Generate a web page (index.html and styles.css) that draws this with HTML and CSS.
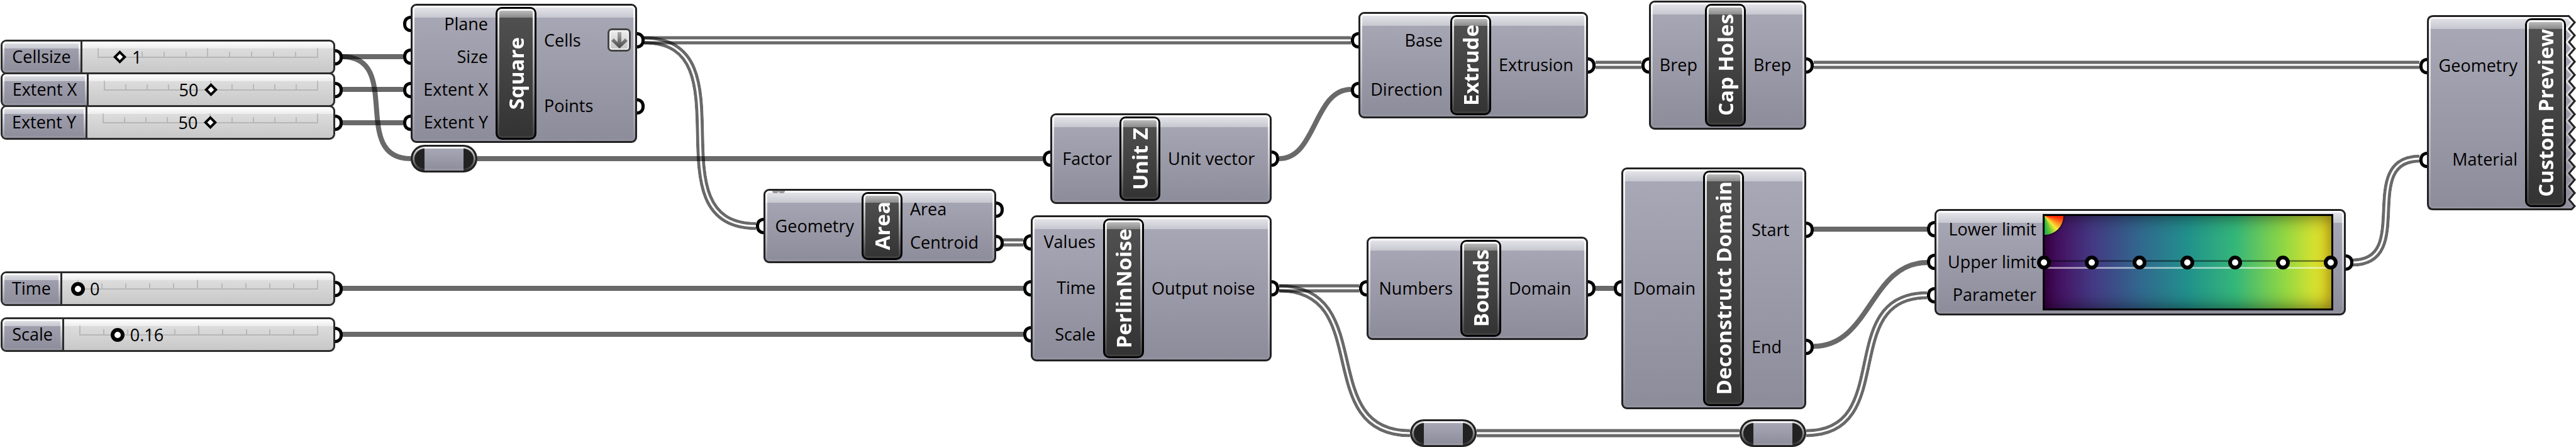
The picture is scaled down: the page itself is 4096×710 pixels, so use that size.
FILE: index.html
```html
<!DOCTYPE html>
<html lang="en">
<head>
<meta charset="utf-8">
<title>Noise field definition</title>
<link rel="stylesheet" href="styles.css">
</head>
<body>
<main class="canvas">
  <svg class="wires" aria-hidden="true">
    <defs>
      <path id="w-area" d="M1024 64C1196 64 1030 359 1202 359"/>
      <path id="w-relay" d="M2034 458C2189 458 2087 688 2242 688"/>
      <path id="w-param" d="M2872 688C3018 688 2918 469 3064 469"/>
      <path id="w-material" d="M3741 417C3840 417 3748 252 3847 252"/>
      <mask id="m-area" maskUnits="userSpaceOnUse" x="1000" y="40" width="230" height="340"><use href="#w-area" class="mask-on"/><use href="#w-area" class="mask-off"/></mask>
      <mask id="m-relay" maskUnits="userSpaceOnUse" x="2000" y="430" width="260" height="280"><use href="#w-relay" class="mask-on"/><use href="#w-relay" class="mask-off"/></mask>
      <mask id="m-param" maskUnits="userSpaceOnUse" x="2860" y="440" width="220" height="270"><use href="#w-param" class="mask-on"/><use href="#w-param" class="mask-off"/></mask>
      <mask id="m-material" maskUnits="userSpaceOnUse" x="3730" y="230" width="140" height="210"><use href="#w-material" class="mask-on"/><use href="#w-material" class="mask-off"/></mask>
    </defs>
    <g class="single">
      <path d="M544 90H641"/><path d="M544 142H641"/><path d="M544 195H641"/>
      <path d="M544 90C641 90 556 252 653 252"/>
      <path d="M759 252H1658"/>
      <path d="M2034 252C2093 252 2089 142 2148 142"/>
      <path d="M544 458H1627"/><path d="M544 531H1627"/>
      <path d="M2537 458H2566"/><path d="M2884 364H3064"/>
      <path d="M2884 550C2974 550 2974 417 3064 417"/>
    </g>
    <g class="double">
      <path d="M1024 60H2148M1024 68H2148"/>
      <path d="M2537 99H2610M2537 107H2610"/>
      <path d="M2884 99H3847M2884 107H3847"/>
      <path d="M1595 381H1627M1595 389H1627"/>
      <path d="M2034 454H2161M2034 462H2161"/>
      <path d="M2348 684H2766M2348 692H2766"/>
    </g>
    <g class="wide">
      <g mask="url(#m-area)"><use href="#w-area"/></g>
      <g mask="url(#m-relay)"><use href="#w-relay"/></g>
      <g mask="url(#m-param)"><use href="#w-param"/></g>
      <g mask="url(#m-material)"><use href="#w-material"/></g>
    </g>
  </svg>

  <div class="sliders extents">
    <div class="slider cellsize">
      <label for="cellsize">Cellsize</label>
      <div class="track"><span class="ticks"><i></i><i></i><i></i><i></i><i></i><i></i><i></i><i></i><i></i><i></i><i></i></span>
        <input class="diamond" id="cellsize" type="range" min="0" max="10" value="1">
        <div class="values"><output class="after" for="cellsize" style="left:10%">1</output></div></div>
      <span class="port out"></span>
    </div>
    <div class="slider extent-x">
      <label for="extent-x">Extent X</label>
      <div class="track"><span class="ticks"><i></i><i></i><i></i><i></i><i></i><i></i><i></i><i></i><i></i><i></i><i></i></span>
        <input class="diamond" id="extent-x" type="range" min="0" max="100" value="50">
        <div class="values"><output class="before" for="extent-x" style="right:50%">50</output></div></div>
      <span class="port out"></span>
    </div>
    <div class="slider extent-y">
      <label for="extent-y">Extent Y</label>
      <div class="track"><span class="ticks"><i></i><i></i><i></i><i></i><i></i><i></i><i></i><i></i><i></i><i></i><i></i></span>
        <input class="diamond" id="extent-y" type="range" min="0" max="100" value="50">
        <div class="values"><output class="before" for="extent-y" style="right:50%">50</output></div></div>
      <span class="port out"></span>
    </div>
  </div>

  <div class="sliders noise-inputs">
    <div class="slider time">
      <label for="time">Time</label>
      <div class="track"><span class="ticks"><i></i><i></i><i></i><i></i><i></i><i></i><i></i><i></i><i></i><i></i><i></i></span>
        <input class="round" id="time" type="range" min="0" max="1" step="0.01" value="0">
        <div class="values"><output class="after" for="time" style="left:0%">0</output></div></div>
      <span class="port out"></span>
    </div>
    <div class="slider scale">
      <label for="scale">Scale</label>
      <div class="track"><span class="ticks"><i></i><i></i><i></i><i></i><i></i><i></i><i></i><i></i><i></i><i></i><i></i></span>
        <input class="round" id="scale" type="range" min="0" max="1" step="0.01" value="0.16">
        <div class="values"><output class="after" for="scale" style="left:16%">0.16</output></div></div>
      <span class="port out"></span>
    </div>
  </div>

  <section class="node square">
    <ul class="inputs"><li>Plane<span class="port in"></span></li><li>Size<span class="port in"></span></li><li>Extent X<span class="port in"></span></li><li>Extent Y<span class="port in"></span></li></ul>
    <h2 class="title"><span>Square</span></h2>
    <ul class="outputs">
      <li>Cells
        <button class="flatten" type="button" aria-label="Flatten"><svg viewBox="0 0 26 26" width="26" height="26"><defs><linearGradient id="arrow" x1="0" y1="0" x2="0" y2="1"><stop offset="0" stop-color="#aaa"/><stop offset="1" stop-color="#444"/></linearGradient></defs><path fill="url(#arrow)" d="M10 0h6v16l6-6 4 4-13 12L0 14l4-4 6 6z"/></svg></button>
        <span class="port out"></span></li>
      <li>Points<span class="port out"></span></li>
    </ul>
  </section>

  <div class="relay relay-size"></div>

  <section class="node area">
    <span class="grip"><i></i><i></i></span>
    <ul class="inputs"><li>Geometry<span class="port in"></span></li></ul>
    <h2 class="title"><span>Area</span></h2>
    <ul class="outputs"><li>Area<span class="port out"></span></li><li>Centroid<span class="port out"></span></li></ul>
  </section>

  <section class="node unit-z">
    <ul class="inputs"><li>Factor<span class="port in"></span></li></ul>
    <h2 class="title"><span>Unit Z</span></h2>
    <ul class="outputs"><li>Unit vector<span class="port out"></span></li></ul>
  </section>

  <section class="node perlin">
    <ul class="inputs"><li>Values<span class="port in"></span></li><li>Time<span class="port in"></span></li><li>Scale<span class="port in"></span></li></ul>
    <h2 class="title"><span>PerlinNoise</span></h2>
    <ul class="outputs"><li>Output noise<span class="port out"></span></li></ul>
  </section>

  <section class="node extrude">
    <ul class="inputs"><li>Base<span class="port in"></span></li><li>Direction<span class="port in"></span></li></ul>
    <h2 class="title"><span>Extrude</span></h2>
    <ul class="outputs"><li>Extrusion<span class="port out"></span></li></ul>
  </section>

  <section class="node cap-holes">
    <ul class="inputs"><li>Brep<span class="port in"></span></li></ul>
    <h2 class="title"><span>Cap Holes</span></h2>
    <ul class="outputs"><li>Brep<span class="port out"></span></li></ul>
  </section>

  <section class="node bounds">
    <ul class="inputs"><li>Numbers<span class="port in"></span></li></ul>
    <h2 class="title"><span>Bounds</span></h2>
    <ul class="outputs"><li>Domain<span class="port out"></span></li></ul>
  </section>

  <section class="node deconstruct">
    <ul class="inputs"><li>Domain<span class="port in"></span></li></ul>
    <h2 class="title"><span>Deconstruct Domain</span></h2>
    <ul class="outputs"><li>Start<span class="port out"></span></li><li>End<span class="port out"></span></li></ul>
  </section>

  <div class="relay relay-left"></div>
  <div class="relay relay-right"></div>

  <section class="node gradient">
    <ul class="inputs"><li>Lower limit<span class="port in"></span></li><li>Upper limit<span class="port in"></span></li><li>Parameter<span class="port in"></span></li></ul>
    <div class="ramp">
      <span class="wheel"></span>
      <div class="stops"><button type="button" aria-label="Stop 1"></button><button type="button" aria-label="Stop 2"></button><button type="button" aria-label="Stop 3"></button><button type="button" aria-label="Stop 4"></button><button type="button" aria-label="Stop 5"></button><button type="button" aria-label="Stop 6"></button><button type="button" aria-label="Stop 7"></button></div>
    </div>
    <ul class="outputs"><li><span class="port out"></span></li></ul>
  </section>

  <section class="node preview">
    <svg class="jagged" viewBox="0 0 237 310" aria-hidden="true">
      <defs>
        <linearGradient id="body" x1="0" y1="0" x2="0" y2="1"><stop offset="0" stop-color="#aaa9b7"/><stop offset="1" stop-color="#8d8c9a"/></linearGradient>
        <linearGradient id="gloss" x1="0" y1="0" x2="0" y2="1"><stop offset="0" stop-color="#e8e8ed"/><stop offset="1" stop-color="#c7c7d0"/></linearGradient>
        <linearGradient id="bevel" gradientUnits="userSpaceOnUse" x1="0" y1="0" x2="0" y2="310"><stop offset="0" stop-color="#fff" stop-opacity=".9"/><stop offset="1" stop-color="#fff" stop-opacity=".05"/></linearGradient>
        <path id="outline" d="M10 1.5H225.500L235 11.500 226 22 235 32.300 226 42.700 235 53.200 226 63.600 235 74 226 84.500 235 94.900 226 105.300 235 115.700 226 126.200 235 136.600 226 147 235 157.400 226 167.800 235 178.200 226 188.700 235 199.100 226 209.500 235 219.900 226 230.400 235 240.800 226 251.200 235 261.600 226 272 235 282.500 226 292.900 235 303.500 230 308.500H10Q1.500 308.500 1.500 300V10Q1.500 1.500 10 1.500Z"/>
        <clipPath id="inside"><use href="#outline"/></clipPath>
      </defs>
      <g clip-path="url(#inside)">
        <rect width="237" height="310" fill="url(#body)"/>
        <rect width="237" height="22" fill="url(#gloss)"/>
        <use href="#outline" fill="none" stroke="url(#bevel)" stroke-width="9"/>
      </g>
      <use href="#outline" fill="none" stroke="#222" stroke-width="3"/>
    </svg>
    <ul class="inputs"><li>Geometry<span class="port in"></span></li><li>Material<span class="port in"></span></li></ul>
    <h2 class="title"><span>Custom Preview</span></h2>
  </section>
</main>
</body>
</html>
```

FILE: styles.css
```css
* { box-sizing: border-box; }

body {
  margin: 0;
  background: #fff;
  color: #000;
  font-family: "Open Sans", "Noto Sans", sans-serif;
  font-size: 27px;
  line-height: 36px;
}

.canvas {
  position: relative;
  min-height: 100vh;
  overflow: hidden;
}

/* Wires */
.wires { position: absolute; inset: 0; width: 100%; height: 100%; }
.wires g { fill: none; }
.single path, .double path, .wide use { stroke: rgba(0, 0, 0, .59); }
.single path { stroke-width: 8px; }
.double path { stroke-width: 5px; }
.wide use { stroke-width: 13px; }
.mask-on { fill: none; stroke: #fff; stroke-width: 13px; }
.mask-off { fill: none; stroke: #000; stroke-width: 3px; }

/* Ports */
.port {
  position: absolute;
  top: 50%;
  width: 12px;
  height: 26px;
  margin-top: -13px;
  border: 5px solid #000;
  background: #fff;
}
.port.in { left: -15px; border-right: 0; border-radius: 13px 0 0 13px; }
.port.out { right: -15px; border-left: 0; border-radius: 0 13px 13px 0; }

/* Components */
.node {
  position: absolute;
  display: grid;
  border: 3px solid #222;
  border-radius: 9px;
  background:
    linear-gradient(#e8e8ed, #c7c7d0) 0 0 / 100% 19px no-repeat,
    linear-gradient(#aaa9b7, #8d8c9a);
}
.node::before, .title::before, .relay::before, .slider label::before {
  content: "";
  position: absolute;
  inset: 0;
  padding: 3px;
  border-radius: 6px;
  background: linear-gradient(rgba(255, 255, 255, .9), rgba(255, 255, 255, .05));
  mask: linear-gradient(#000 0 0) content-box exclude, linear-gradient(#000 0 0);
}
.inputs, .outputs {
  position: relative;
  display: flex;
  flex-direction: column;
  margin: 0;
  padding: 3px 0;
  list-style: none;
  white-space: nowrap;
}
.inputs li, .outputs li {
  position: relative;
  display: flex;
  flex: 1;
  align-items: center;
  padding: 0 12px 1px;
}
.inputs li { justify-content: flex-end; }
.outputs li { justify-content: space-between; }

.title {
  position: relative;
  display: flex;
  align-items: center;
  justify-content: center;
  margin: 2px 0;
  border: 3px solid #000;
  border-radius: 10px;
  background:
    linear-gradient(#c8c8c8, #8a8a8a) 0 0 / 100% 14px no-repeat,
    linear-gradient(#525252, #333);
  color: #fff;
  font-size: 33px;
  font-weight: 700;
  line-height: 44px;
}
.title span {
  position: relative;
  writing-mode: vertical-rl;
  transform: rotate(180deg);
  white-space: nowrap;
}

.square { left: 653px; top: 6px; width: 360px; height: 221px; grid-template-columns: 132px 65px 1fr; }
.area { left: 1214px; top: 300px; width: 370px; height: 118px; grid-template-columns: 153px 65px 1fr; }
.unit-z { left: 1670px; top: 180px; width: 352px; height: 144px; grid-template-columns: 107px 65px 1fr; }
.perlin { left: 1639px; top: 342px; width: 383px; height: 232px; grid-template-columns: 112px 65px 1fr; }
.extrude { left: 2160px; top: 19px; width: 365px; height: 169px; grid-template-columns: 143px 65px 1fr; }
.cap-holes { left: 2622px; top: 1px; width: 250px; height: 205px; grid-template-columns: 86px 65px 1fr; }
.bounds { left: 2173px; top: 376px; width: 352px; height: 164px; grid-template-columns: 146px 65px 1fr; }
.deconstruct { left: 2578px; top: 266px; width: 294px; height: 384px; grid-template-columns: 127px 65px 1fr; }
.gradient { left: 3076px; top: 332px; width: 654px; height: 169px; grid-template-columns: 169px 462px 1fr; }
.preview { left: 3859px; top: 24px; width: 237px; height: 310px; grid-template-columns: 153px 65px 1fr; }

.flatten {
  display: grid;
  place-items: center;
  width: 37px;
  height: 37px;
  margin-right: -5px;
  padding: 0;
  border: 3px solid #444;
  border-radius: 7px;
  background: linear-gradient(#eee, #c4c4c4);
  box-shadow: inset 0 0 0 2px #f4f4f4;
}

.grip {
  position: absolute;
  left: 11px;
  top: 0;
  z-index: 1;
  display: flex;
}
.grip i { width: 10px; height: 4px; border-radius: 0 0 5px 5px; background: #999; }

/* Gradient ramp */
.gradient .inputs li { padding-right: 10px; }
.gradient .outputs li { padding: 0; }
.ramp {
  position: relative;
  margin: 5px 0;
  border: 3px solid #000;
  background: linear-gradient(90deg, #440154, #443983 16.67%, #31688e 33.33%, #21918c 50%, #35b779 66.67%, #90d743 83.33%, #fde725);
}
.ramp::before {
  content: "";
  position: absolute;
  inset: 0;
  box-shadow: inset 0 0 28px rgba(0, 0, 0, .6);
}
.wheel {
  position: absolute;
  left: 0;
  top: 0;
  width: 30px;
  height: 30px;
  border-radius: 0 0 30px 0;
  background: conic-gradient(from 0deg at 0 0, #ff2800 95deg, #ff9020 118deg, #f4ea38 138deg, #6cc832 160deg, #18a858 180deg);
  box-shadow: 0 0 3px 1px rgba(0, 0, 0, .7);
}
.stops {
  position: absolute;
  left: -12px;
  right: -10px;
  top: 50%;
  display: flex;
  justify-content: space-between;
  margin-top: -11px;
}
.stops::before {
  content: "";
  position: absolute;
  left: 12px;
  right: 12px;
  top: 7px;
  height: 8px;
  border-top: 3px solid rgba(0, 0, 0, .4);
  border-bottom: 3px solid rgba(255, 255, 255, .5);
}
.stops button {
  position: relative;
  width: 22px;
  height: 22px;
  padding: 0;
  border: 6px solid #000;
  border-radius: 50%;
  background: #fff;
}

/* Torn-edge preview component */
.preview { border-color: transparent; background: none; }
.preview::before { content: none; }
.jagged { position: absolute; left: -3px; top: -3px; width: 237px; height: 310px; }

/* Relays */
.relay {
  position: absolute;
  width: 106px;
  height: 44px;
  border: 3px solid #222;
  border-radius: 22px;
  background:
    linear-gradient(90deg, #222 19px, transparent 19px calc(100% - 19px), #222 calc(100% - 19px)),
    linear-gradient(#aaa9b7, #8d8c9a);
}
.relay::before { border-radius: 19px; }
.relay-size { left: 653px; top: 230px; }
.relay-left { left: 2242px; top: 666px; }
.relay-right { left: 2766px; top: 666px; }

/* Number sliders */
.sliders {
  position: absolute;
  left: 1px;
  display: flex;
  flex-direction: column;
  width: 532px;
}
.extents { top: 63px; }
.extents .slider + .slider { margin-top: -3px; }
.noise-inputs { top: 431px; gap: 18px; }
.slider {
  position: relative;
  display: grid;
  height: 55px;
  border: 3px solid #2c2c2c;
  border-radius: 9px;
  background:
    linear-gradient(#fff, #ececec) 0 0 / 100% 11px no-repeat,
    linear-gradient(#e2e2e2, #c8c8c8);
}
.slider label {
  position: relative;
  display: flex;
  align-items: center;
  justify-content: center;
  padding-bottom: 1px;
  border-right: 3px solid #2c2c2c;
  border-radius: 6px 0 0 6px;
  background:
    linear-gradient(#e4e4ea, #c7c7d0) 0 0 / 100% 11px no-repeat,
    linear-gradient(#a5a4b2, #8d8c9a);
  white-space: nowrap;
}
.slider label::before { border-radius: 6px 0 0 6px; }
.cellsize { grid-template-columns: 127px 1fr; }
.extent-x { grid-template-columns: 137px 1fr; }
.extent-y { grid-template-columns: 135px 1fr; }
.time { grid-template-columns: 95px 1fr; }
.scale { grid-template-columns: 98px 1fr; }

.track {
  display: grid;
  align-items: center;
  padding: 0 24px;
}
.track > * { grid-area: 1 / 1; }
.ticks {
  display: flex;
  justify-content: space-between;
  align-items: flex-start;
  height: 16px;
  margin-bottom: 14px;
  border-bottom: 2px solid rgba(0, 0, 0, .14);
}
.ticks i { width: 2px; height: 8px; margin-top: 6px; background: rgba(0, 0, 0, .14); }
.ticks i:nth-child(5n + 1) { height: 14px; margin-top: 0; }

.track input {
  appearance: none;
  height: 22px;
  background: none;
}
.track .diamond { margin: 0 -7px; }
.track .round { margin: 0 -10px; }
.track input::-webkit-slider-thumb {
  appearance: none;
  box-sizing: border-box;
  background: #fff;
}
.diamond::-webkit-slider-thumb {
  width: 15px;
  height: 15px;
  border: 4px solid #000;
  transform: rotate(45deg);
}
.round::-webkit-slider-thumb {
  width: 22px;
  height: 22px;
  border: 6px solid #000;
  border-radius: 50%;
}
.values { position: relative; height: 36px; pointer-events: none; }
.values output { position: absolute; top: 0; }
.values .after { margin-left: 20px; }
.values .before { margin-right: 20px; }
```
